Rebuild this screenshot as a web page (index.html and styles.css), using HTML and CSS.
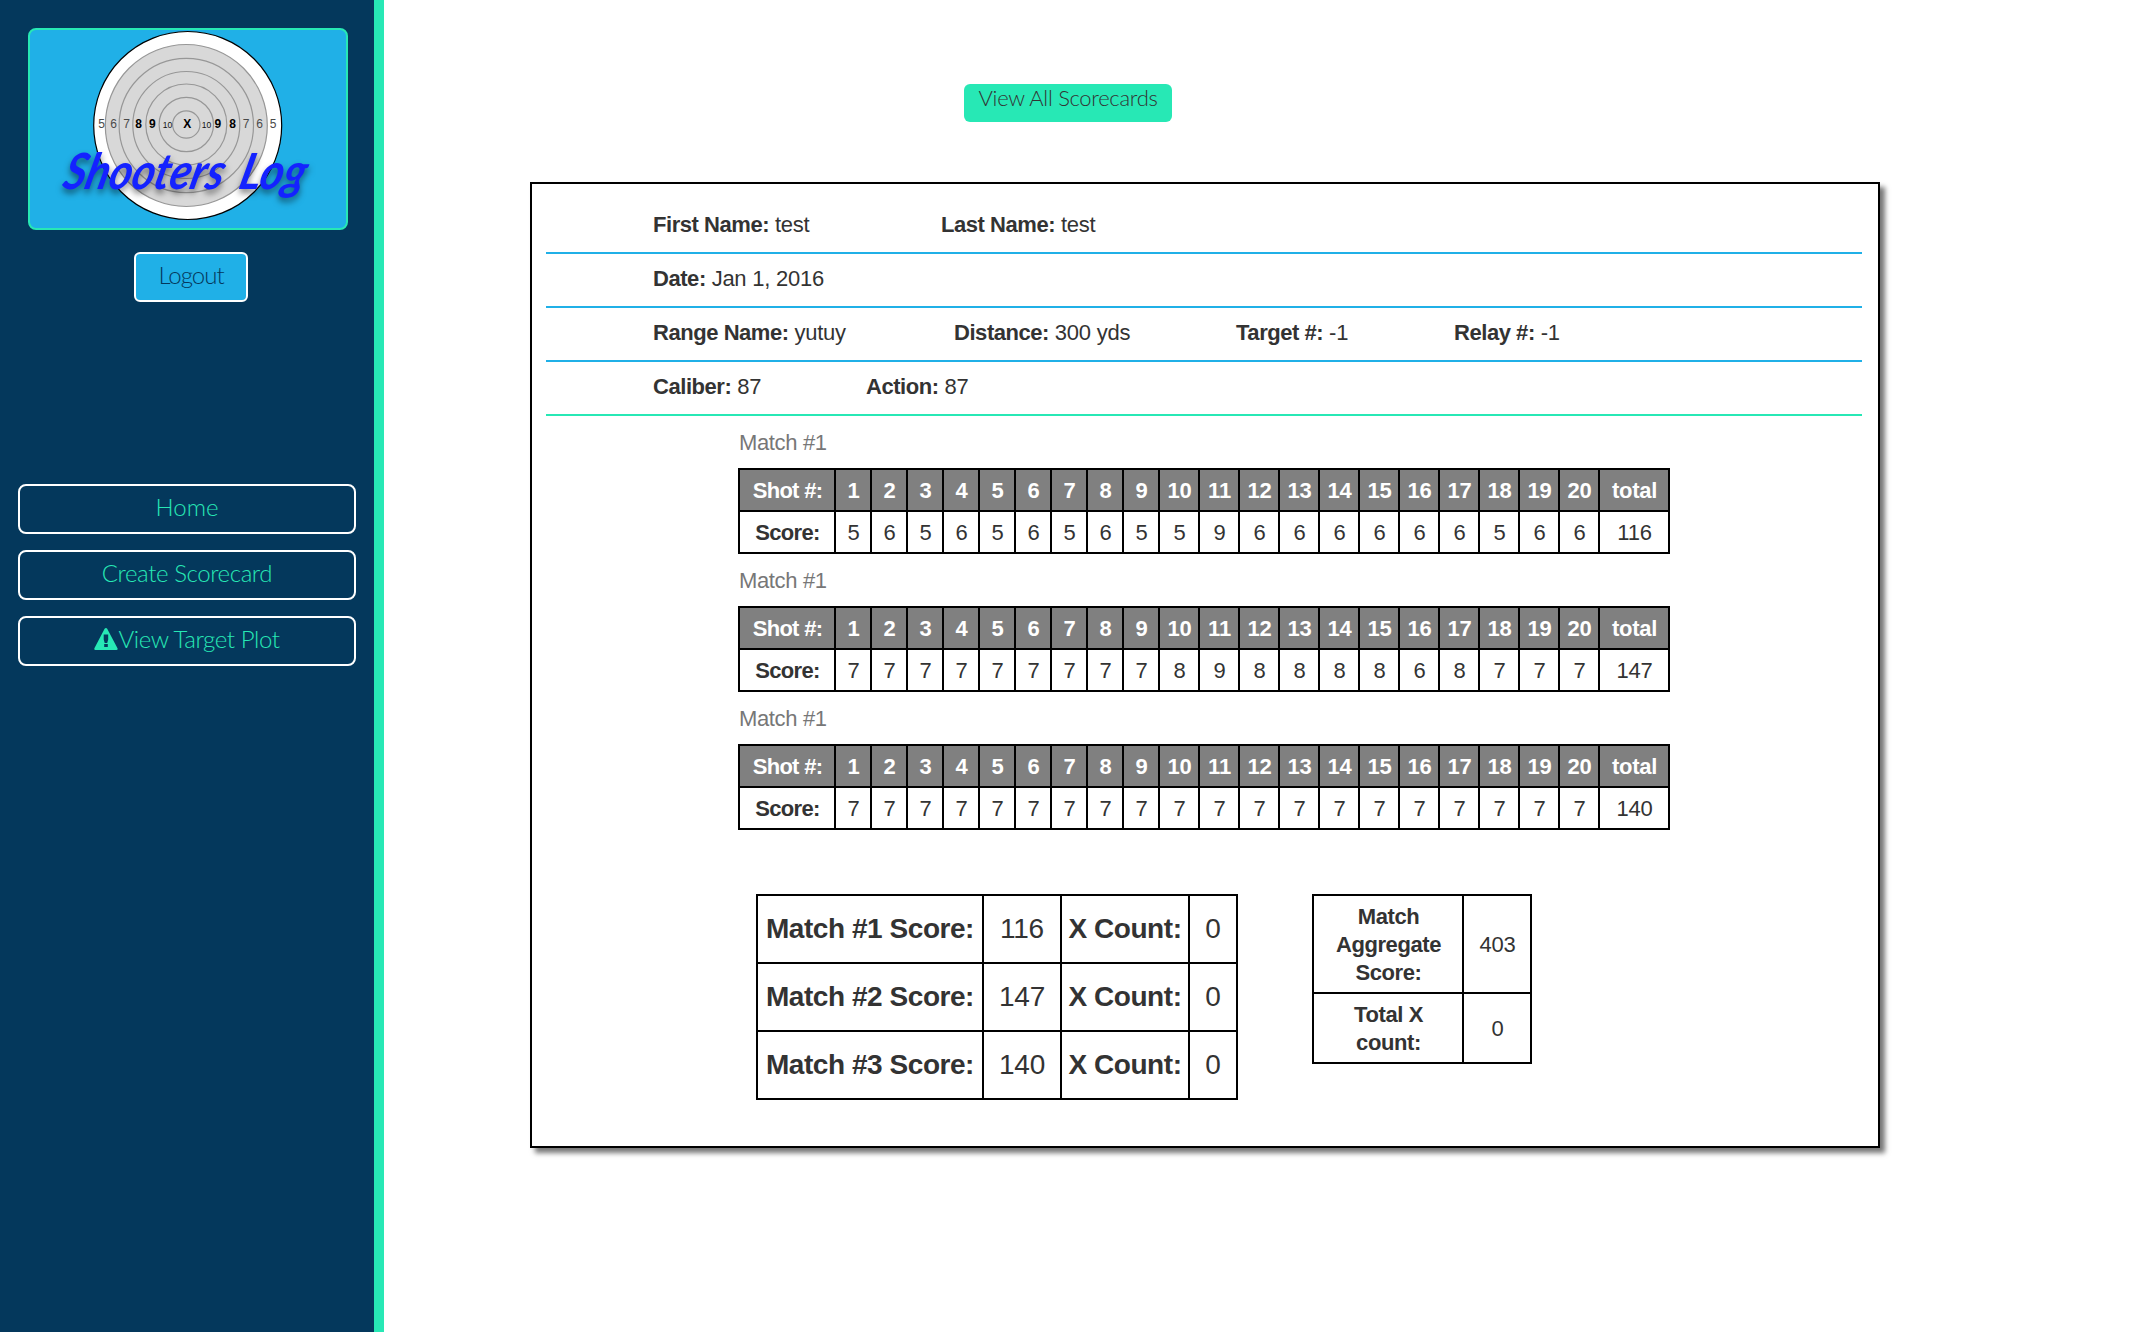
FILE: index.html
```html
<!DOCTYPE html>
<html lang="en">
<head>
<meta charset="utf-8">
<title>Shooters Log</title>
<link rel="stylesheet" href="styles.css">
</head>
<body>
<aside class="sidebar">
  <div class="logo">
    <svg class="logo-art" viewBox="0 0 316 198" width="316" height="198">
      <circle cx="157.7" cy="95.5" r="94" fill="#fff" stroke="#000" stroke-width="1.2"/>
      <g fill="#d8d8d8" stroke="#979797" stroke-width="1.2">
        <circle cx="156.3" cy="95.5" r="81"/>
        <circle cx="156.3" cy="95.5" r="67.2"/>
        <circle cx="156.3" cy="95" r="53.5"/>
        <circle cx="156.3" cy="94.5" r="40.5"/>
        <circle cx="156.3" cy="94.5" r="27.2"/>
        <circle cx="156.3" cy="94.5" r="13.7"/>
      </g>
      <g class="ring-num">
        <text x="71.5" y="98">5</text><text x="83.5" y="98">6</text><text x="96.5" y="98">7</text>
        <text x="216" y="98">7</text><text x="229.5" y="98">6</text><text x="243" y="98">5</text>
      </g>
      <g class="ring-num strong">
        <text x="108.7" y="98">8</text><text x="122.3" y="98">9</text><text x="157.3" y="98">X</text>
        <text x="187.8" y="98">9</text><text x="202.7" y="98">8</text>
      </g>
      <g class="ring-num small">
        <text x="137.5" y="98">10</text><text x="176.5" y="98">10</text>
      </g>
      <g class="brand">
        <text transform="translate(31 159) skewX(-14)" textLength="160" lengthAdjust="spacingAndGlyphs">Shooters</text>
        <text transform="translate(207 159) skewX(-14)" textLength="66" lengthAdjust="spacingAndGlyphs">Log</text>
      </g>
    </svg>
  </div>
  <a class="logout">Logout</a>
  <nav class="menu">
    <a class="menu-item menu-home">Home</a>
    <a class="menu-item">Create Scorecard</a>
    <a class="menu-item"><svg class="warn" viewBox="0 0 24 22" width="24" height="22"><path fill="#27e8b5" fill-rule="evenodd" d="M10.6.8Q12 -.8 13.200 .8L23.500 20.300Q24 22 22.500 22H1.300Q0 22 .4 20.300ZM9.700 6.500V11.500L10.700 15H13.200L14.200 11.500V6.500ZM10.200 16V19H13.800V16Z"/></svg>View Target Plot</a>
  </nav>
</aside>
<main class="content">
  <a class="view-all">View All Scorecards</a>
  <section class="card">
    <div class="info info-name"><span><b>First Name:</b> test</span><span><b>Last Name:</b> test</span></div>
    <div class="info"><span><b>Date:</b> Jan 1, 2016</span></div>
    <div class="info info-range"><span><b>Range Name:</b> yutuy</span><span><b>Distance:</b> 300 yds</span><span><b>Target #:</b> -1</span><span><b>Relay #:</b> -1</span></div>
    <div class="info info-rifle"><span><b>Caliber:</b> 87</span><span><b>Action:</b> 87</span></div>
    <div class="matches">
      <table class="shots"><caption>Match #1</caption>
        <colgroup><col class="c-label"><col span="9" class="c-one"><col span="11" class="c-two"><col class="c-total"></colgroup>
        <tr class="head"><th>Shot #:</th><th>1</th><th>2</th><th>3</th><th>4</th><th>5</th><th>6</th><th>7</th><th>8</th><th>9</th><th>10</th><th>11</th><th>12</th><th>13</th><th>14</th><th>15</th><th>16</th><th>17</th><th>18</th><th>19</th><th>20</th><th>total</th></tr>
        <tr><th>Score:</th><td>5</td><td>6</td><td>5</td><td>6</td><td>5</td><td>6</td><td>5</td><td>6</td><td>5</td><td>5</td><td>9</td><td>6</td><td>6</td><td>6</td><td>6</td><td>6</td><td>6</td><td>5</td><td>6</td><td>6</td><td>116</td></tr>
      </table>
      <table class="shots"><caption>Match #1</caption>
        <colgroup><col class="c-label"><col span="9" class="c-one"><col span="11" class="c-two"><col class="c-total"></colgroup>
        <tr class="head"><th>Shot #:</th><th>1</th><th>2</th><th>3</th><th>4</th><th>5</th><th>6</th><th>7</th><th>8</th><th>9</th><th>10</th><th>11</th><th>12</th><th>13</th><th>14</th><th>15</th><th>16</th><th>17</th><th>18</th><th>19</th><th>20</th><th>total</th></tr>
        <tr><th>Score:</th><td>7</td><td>7</td><td>7</td><td>7</td><td>7</td><td>7</td><td>7</td><td>7</td><td>7</td><td>8</td><td>9</td><td>8</td><td>8</td><td>8</td><td>8</td><td>6</td><td>8</td><td>7</td><td>7</td><td>7</td><td>147</td></tr>
      </table>
      <table class="shots"><caption>Match #1</caption>
        <colgroup><col class="c-label"><col span="9" class="c-one"><col span="11" class="c-two"><col class="c-total"></colgroup>
        <tr class="head"><th>Shot #:</th><th>1</th><th>2</th><th>3</th><th>4</th><th>5</th><th>6</th><th>7</th><th>8</th><th>9</th><th>10</th><th>11</th><th>12</th><th>13</th><th>14</th><th>15</th><th>16</th><th>17</th><th>18</th><th>19</th><th>20</th><th>total</th></tr>
        <tr><th>Score:</th><td>7</td><td>7</td><td>7</td><td>7</td><td>7</td><td>7</td><td>7</td><td>7</td><td>7</td><td>7</td><td>7</td><td>7</td><td>7</td><td>7</td><td>7</td><td>7</td><td>7</td><td>7</td><td>7</td><td>7</td><td>140</td></tr>
      </table>
    </div>
    <div class="totals">
      <table class="summary">
        <colgroup><col class="s-label"><col class="s-score"><col class="s-xlabel"><col class="s-x"></colgroup>
        <tr><th>Match #1 Score:</th><td>116</td><th>X Count:</th><td>0</td></tr>
        <tr><th>Match #2 Score:</th><td>147</td><th>X Count:</th><td>0</td></tr>
        <tr><th>Match #3 Score:</th><td>140</td><th>X Count:</th><td>0</td></tr>
      </table>
      <table class="aggregate">
        <colgroup><col class="a-label"><col class="a-value"></colgroup>
        <tr class="a-score"><th>Match Aggregate Score:</th><td>403</td></tr>
        <tr class="a-count"><th>Total X<br>count:</th><td>0</td></tr>
      </table>
    </div>
  </section>
</main>
</body>
</html>
```
FILE: styles.css
```css
* { box-sizing: border-box; }
body {
  margin: 0;
  height: 1332px;
  display: flex;
  background: #fff;
  color: #333;
  font: 22px/28px "Liberation Sans", Arial, sans-serif;
  letter-spacing: -0.25px;
}

/* Sidebar */
.sidebar {
  width: 384px;
  flex: none;
  padding: 28px 18px 0;
  background: #04385c;
  border-right: 10px solid #27e8b5;
  font-family: Lato, sans-serif;
  font-weight: 300;
  font-size: 24px;
  letter-spacing: -0.4px;
}
.logo {
  width: 320px;
  height: 202px;
  margin-left: 10px;
  background: #20b0e7;
  border: 2px solid #27e8b5;
  border-radius: 8px;
}
.logo-art { display: block; }
.ring-num { font: 12px "Liberation Sans", Arial, sans-serif; fill: #4a4a4a; text-anchor: middle; letter-spacing: 0; }
.ring-num.strong { font-weight: bold; fill: #000; }
.ring-num.small { font-size: 8.5px; fill: #111; }
.brand {
  font: italic 700 50px Lato, sans-serif;
  letter-spacing: 0;
  fill: #1422ff;
  filter: drop-shadow(0 4px 3px rgba(0, 0, 0, .5));
}
.logout {
  display: block;
  width: 114px;
  height: 50px;
  margin: 22px 0 0 116px;
  border: 2px solid #fff;
  border-radius: 6px;
  background: #20b0e7;
  color: #04385c;
  text-align: center;
  letter-spacing: -1px;
  line-height: 41px;
}
.menu { display: flex; flex-direction: column; gap: 16px; margin-top: 182px; }
.menu-item {
  display: flex;
  justify-content: center;
  height: 50px;
  border: 2px solid #fff;
  border-radius: 8px;
  color: #27e8b5;
  line-height: 42px;
}
.menu-home { letter-spacing: 0; }
.warn { margin-top: 10px; }

/* Main column */
.content { flex: 1; padding-top: 84px; }
.view-all {
  display: block;
  width: 208px;
  height: 38px;
  margin-left: 580px;
  border-radius: 6px;
  background: #27e8b5;
  font: 300 22px/28px Lato, sans-serif;
  letter-spacing: -0.3px;
  text-align: center;
}
.card {
  width: 1350px;
  height: 966px;
  margin: 60px 0 0 146px;
  padding: 16px 16px 0 14px;
  border: 2px solid #000;
  box-shadow: 5px 5px 5px #777;
}
.info {
  display: grid;
  height: 54px;
  padding: 11px 0 0 107px;
  border-bottom: 2px solid #20b0e7;
  white-space: nowrap;
}
.info b { letter-spacing: -0.45px; }
.info-name { grid-template-columns: 288px 1fr; }
.info-range { grid-template-columns: 301px 282px 218px 1fr; }
.info-rifle { grid-template-columns: 213px 1fr; border-bottom-color: #27e8b5; }

/* Tables */
table { border-collapse: collapse; table-layout: fixed; text-align: center; }
th, td { border: 2px solid #000; padding: 2px 0 0 1px; }
.matches { display: flex; flex-direction: column; margin: 12px 0 0 192px; }
.shots { width: 932px; margin-bottom: 12px; }
.shots tr { height: 42px; }
.shots th:first-child { letter-spacing: -0.7px; }
caption { height: 40px; padding: 1px 0 0 1px; text-align: left; color: #777; letter-spacing: -0.35px; }
.head { background: #808080; color: #fff; }
.c-label { width: 96px; }
.c-one { width: 36px; }
.c-two { width: 40px; }
.c-total { width: 70px; }
.totals { display: flex; align-items: flex-start; gap: 74px; margin: 52px 0 0 210px; }
.summary { width: 482px; font-size: 28px; }
.summary tr { height: 68px; }
.summary th, .summary td { padding: 0; }
.summary th { letter-spacing: -0.45px; }
.s-label { width: 226px; }
.s-score { width: 78px; }
.s-xlabel { width: 128px; }
.s-x { width: 48px; }
.aggregate { width: 220px; }
.aggregate th { padding: 2px 17px 0 18px; letter-spacing: -0.4px; }
.a-score { height: 98px; }
.a-count { height: 70px; }
.a-label { width: 150px; }
.a-value { width: 68px; }
```
